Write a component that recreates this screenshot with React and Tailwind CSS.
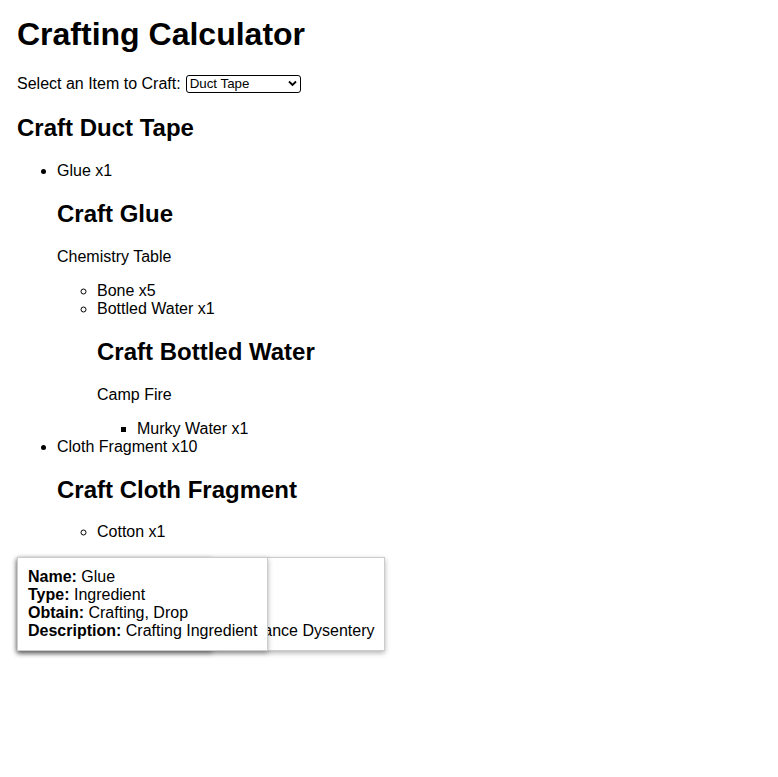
import React from "react";

function Tip({ w, lines, z }) {
  return (
    <div
      className={`absolute left-0 top-0 bg-white border border-[#cccccc] p-[10px] leading-[18px] whitespace-nowrap overflow-hidden shadow-[0_2px_5px_rgba(0,0,0,0.3)] ${w} ${z}`}
    >
      {lines.map(([k, v]) => (
        <div key={k}>
          <b className="font-bold">{k}:</b> {v}
        </div>
      ))}
    </div>
  );
}

const H2 = ({ children }) => (
  <h2 className="text-[24px] font-bold leading-[28px] my-[19.92px]">{children}</h2>
);

export default function App() {
  return (
    <div className="px-[17px] pt-[16px] font-['Liberation_Sans',Arial,sans-serif] leading-[18px] text-[16px] text-black bg-white min-h-[777px]">
      <h1 className="text-[32px] font-bold leading-[36.8px] mb-[21.44px]">Crafting Calculator</h1>
      <div className="flex items-center h-[20px]">
        <label>Select an Item to Craft:</label>
        <span className="relative inline-block ml-[5px]">
          <select
            defaultValue="Duct Tape"
            className="appearance-none block w-[115px] h-[18px] border-[1.5px] border-black rounded-[3px] bg-white pl-[3px] text-[13.33px] leading-[14px] font-['Liberation_Sans',Arial,sans-serif]"
          >
            <option>Duct Tape</option>
            <option>Glue</option>
            <option>Bottled Water</option>
            <option>Cloth Fragment</option>
          </select>
          <svg
            className="absolute right-[4px] top-[5px] pointer-events-none"
            width="9"
            height="7"
            viewBox="0 0 9 7"
          >
            <path d="M1 1.5 L4.5 5 L8 1.5" fill="none" stroke="black" strokeWidth="1.8" />
          </svg>
        </span>
      </div>
      <H2>Craft Duct Tape</H2>
      <ul className="list-disc pl-10 my-4">
        <li>
          Glue x1
          <H2>Craft Glue</H2>
          <p className="my-4">Chemistry Table</p>
          <ul className="list-[circle] pl-10">
            <li>Bone x5</li>
            <li>
              Bottled Water x1
              <H2>Craft Bottled Water</H2>
              <p className="my-4">Camp Fire</p>
              <ul className="list-[square] pl-10">
                <li>Murky Water x1</li>
              </ul>
            </li>
          </ul>
        </li>
        <li>
          Cloth Fragment x10
          <H2>Craft Cloth Fragment</H2>
          <ul className="list-[circle] pl-10">
            <li>Cotton x1</li>
          </ul>
        </li>
      </ul>
      <div className="relative h-0">
        <Tip
          w="w-[368px]"
          z="z-0"
          lines={[
            ["Name", "Bottled Water"],
            ["Type", "Consumable"],
            ["Obtain", "Crafting"],
            ["Description", "Restores Thirst, Chance Dysentery"],
          ]}
        />
        <Tip
          w="w-[195px]"
          z="z-10"
          lines={[
            ["Name", "Bone"],
            ["Type", "Ingredient"],
            ["Obtain", "Drop"],
            ["Description", "Ingredient"],
          ]}
        />
        <Tip
          w="w-[251px]"
          z="z-20"
          lines={[
            ["Name", "Glue"],
            ["Type", "Ingredient"],
            ["Obtain", "Crafting, Drop"],
            ["Description", "Crafting Ingredient"],
          ]}
        />
      </div>
    </div>
  );
}
